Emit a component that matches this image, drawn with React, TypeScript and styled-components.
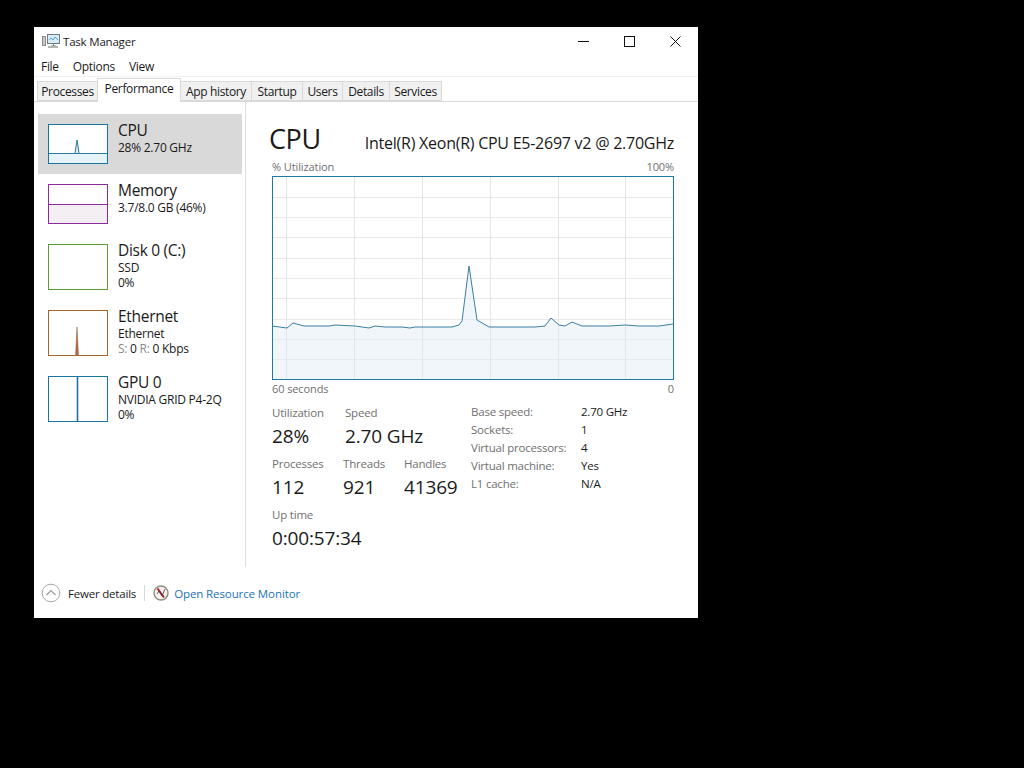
import styled, { createGlobalStyle } from "styled-components";

const GlobalStyle = createGlobalStyle`
  html, body {
    margin: 0;
    background: #000;
    font-family: "Open Sans", "Noto Sans", "Liberation Sans", sans-serif;
    color: #1a1a1a;
  }
`;

const Page = styled.div`
  padding: 27px 0 0 34px;
  height: 741px;
  box-sizing: content-box;
`;

const Window = styled.div`
  width: 664px;
  height: 591px;
  background: #fff;
  display: flex;
  flex-direction: column;
  overflow: hidden;
`;

const TitleBar = styled.div`
  height: 28px;
  display: flex;
  align-items: center;
  padding-left: 8px;
  flex: none;
`;

const TitleText = styled.span`
  font-size: 11.5px;
  margin-left: 3px;
  letter-spacing: -0.2px;
  flex: 1;
`;

const WinButton = styled.div`
  width: 46px;
  height: 28px;
  display: flex;
  align-items: center;
  justify-content: center;
`;

const MenuBar = styled.div`
  height: 22px;
  display: flex;
  align-items: center;
  gap: 14px;
  padding: 2px 0 0 7px;
  font-size: 12px;
  letter-spacing: -0.3px;
  flex: none;
  border-bottom: 1px solid #f0f0f0;
  box-sizing: border-box;
`;

const TabStrip = styled.div`
  height: 25px;
  display: flex;
  align-items: flex-end;
  padding-left: 4px;
  border-bottom: 1px solid #d9d9d9;
  box-sizing: border-box;
  flex: none;
`;

const Tab = styled.div<{ $active?: boolean; $w: number }>`
  width: ${(p) => p.$w}px;
  height: ${(p) => (p.$active ? 24 : 20)}px;
  box-sizing: border-box;
  display: flex;
  align-items: center;
  justify-content: center;
  font-size: 12px;
  letter-spacing: -0.35px;
  white-space: nowrap;
  background: ${(p) => (p.$active ? "#fff" : "#f0f0f0")};
  border: 1px solid #d9d9d9;
  border-bottom: ${(p) => (p.$active ? "none" : "1px solid #d9d9d9")};
  margin-left: -1px;
  margin-bottom: ${(p) => (p.$active ? "-1px" : "0")};
  padding-bottom: ${(p) => (p.$active ? "4px" : "0")};
  position: relative;
  z-index: ${(p) => (p.$active ? 1 : 0)};
`;

const Body = styled.div`
  flex: 1;
  display: flex;
  min-height: 0;
`;

const Sidebar = styled.div`
  width: 212px;
  box-sizing: border-box;
  padding: 12px 3px 0 4px;
  border-right: 1px solid #dedede;
  flex: none;
`;

const SideItem = styled.div<{ $selected?: boolean; $h: number }>`
  height: ${(p) => p.$h}px;
  box-sizing: border-box;
  padding: 10px 0 0 10px;
  display: flex;
  gap: 10px;
  background: ${(p) => (p.$selected ? "#d9d9d9" : "transparent")};
`;

const Thumb = styled.svg<{ $h: number }>`
  width: 60px;
  height: ${(p) => p.$h}px;
  flex: none;
  display: block;
`;

const SideText = styled.div`
  display: flex;
  flex-direction: column;
  margin-top: -3px;
`;

const SideName = styled.div`
  font-size: 15.5px;
  line-height: 19px;
  letter-spacing: -0.3px;
`;

const SideSub = styled.div`
  font-size: 12px;
  line-height: 15px;
  letter-spacing: -0.25px;
  white-space: nowrap;
`;

const Muted = styled.span`
  color: #8a8a8a;
`;

const Main = styled.div`
  flex: 1;
  padding: 14px 24px 0 26px;
  min-width: 0;
`;

const Heading = styled.div`
  display: flex;
  justify-content: space-between;
  align-items: baseline;
  height: 43px;
`;

const HeadTitle = styled.div`
  font-size: 27px;
  line-height: 46px;
  letter-spacing: -0.4px;
  margin-left: -3px;
`;

const HeadModel = styled.div`
  font-size: 16px;
  letter-spacing: -0.25px;
`;

const AxisRow = styled.div`
  display: flex;
  justify-content: space-between;
  font-size: 11px;
  line-height: 16px;
  color: #707070;
  letter-spacing: -0.1px;
`;

const ChartSvg = styled.svg`
  display: block;
  width: 402px;
  height: 204px;
  margin: 1px 0;
`;

const Details = styled.div`
  display: flex;
  margin-top: 8px;
`;

const StatsColumn = styled.div`
  width: 199px;
  flex: none;
`;

const StatRow = styled.div`
  display: flex;
  height: 51px;
`;

const Stat = styled.div<{ $w: number }>`
  width: ${(p) => p.$w}px;
  flex: none;
`;

const StatLabel = styled.div`
  font-size: 11.5px;
  line-height: 16px;
  color: #707070;
  letter-spacing: -0.2px;
`;

const StatValue = styled.div`
  font-size: 19px;
  line-height: 30px;
  letter-spacing: -0.15px;
  white-space: nowrap;
`;

const Specs = styled.div`
  display: grid;
  grid-template-columns: 110px 1fr;
  grid-auto-rows: 18px;
  align-items: center;
  align-content: start;
  margin-top: -3px;
  font-size: 11.5px;
  letter-spacing: -0.22px;
  white-space: nowrap;
`;

const SpecKey = styled.div`
  color: #707070;
`;

const Footer = styled.div`
  height: 51px;
  flex: none;
  box-sizing: border-box;
  display: flex;
  align-items: center;
  padding: 1px 0 0 7px;
  font-size: 11.5px;
  letter-spacing: -0.2px;
`;

const FewerLabel = styled.span`
  margin-left: 7px;
`;

const Separator = styled.div`
  width: 1px;
  height: 16px;
  background: #d9d9d9;
  margin: 0 8px;
`;

const MonitorLink = styled.span`
  color: #1a73b8;
  margin-left: 5px;
  letter-spacing: -0.1px;
`;

const AppIcon = () => (
  <svg width="18" height="16" viewBox="0 0 18 16">
    <rect x="0.5" y="3.5" width="3" height="9" fill="#c9c9c9" stroke="#8d8d8d" />
    <rect x="5.5" y="1.5" width="12" height="9" fill="#d8ecf8" stroke="#6b7c88" />
    <path d="M7 7l2-2 2 2 2-3 3 3" fill="none" stroke="#5fa2cf" />
    <path d="M9 13h5M11.5 10.5v2.5" stroke="#7b7b7b" />
    <rect x="6" y="13" width="10" height="2" fill="#b5b5b5" />
  </svg>
);

const MinIcon = () => (
  <svg width="11" height="11" viewBox="0 0 11 11">
    <path d="M0 5.5h11" stroke="#111" />
  </svg>
);

const MaxIcon = () => (
  <svg width="11" height="11" viewBox="0 0 11 11">
    <rect x="0.5" y="0.5" width="10" height="10" fill="none" stroke="#111" />
  </svg>
);

const CloseIcon = () => (
  <svg width="11" height="11" viewBox="0 0 11 11">
    <path d="M0.5 0.5l10 10M10.5 0.5l-10 10" stroke="#111" />
  </svg>
);

const FewerIcon = () => (
  <svg width="20" height="20" viewBox="0 0 20 20">
    <circle cx="10" cy="10" r="8.8" fill="#fff" stroke="#a8a8a8" />
    <path d="M5.5 12l4.5-4.5 4.5 4.5" fill="none" stroke="#9a9a9a" strokeWidth="1.2" />
  </svg>
);

const ResmonIcon = () => (
  <svg width="16" height="16" viewBox="0 0 16 16">
    <circle cx="8" cy="8" r="7" fill="#f4f1ec" stroke="#8f8a82" strokeWidth="1.4" />
    <path d="M4.5 3.5l6.5 9" stroke="#b3202c" strokeWidth="2" />
    <path d="M4 9l2-3 3 5 3-7" fill="none" stroke="#3a3a4a" strokeWidth="0.8" />
  </svg>
);

// traced from the reference, x and y inside the 402x204 chart
const linePoints = [
  [0, 150], [15, 152], [21, 147], [32, 150], [57, 150], [63, 149], [83, 150], [97, 152],
  [103, 150], [113, 151], [130, 151], [138, 152], [143, 151], [150, 151], [160, 151],
  [173, 151], [180, 151], [187, 149], [190, 145], [197, 90], [205, 144], [217, 151],
  [230, 151], [243, 151], [263, 151], [273, 150], [279, 142], [287, 149], [293, 150],
  [300, 146], [310, 150], [327, 150], [337, 150], [353, 149], [367, 150], [387, 150], [401, 148],
];

const verticals = [14, 82, 150, 218, 286, 353];
const horizontals = [21, 41, 61, 82, 102, 122, 143, 163, 183];

const CpuChart = () => {
  const line = linePoints.map((p) => p.join(",")).join(" ");
  return (
    <ChartSvg viewBox="0 0 402 204">
      <rect width="402" height="204" fill="#fff" />
      <polygon points={`0,204 ${line} 402,204`} fill="#f1f6fb" />
      {horizontals.map((y) => (
        <path key={y} d={`M0 ${y + 0.5}H402`} stroke="#e9e9e9" />
      ))}
      {verticals.map((x) => (
        <path key={x} d={`M${x + 0.5} 0V204`} stroke="#e2e6ea" />
      ))}
      <polyline points={line} fill="none" stroke="#3b7fa3" strokeWidth="1" />
      <rect x="0.5" y="0.5" width="401" height="203" fill="none" stroke="#1c7a9c" />
    </ChartSvg>
  );
};

type ThumbProps = { h: number; color: string; children?: React.ReactNode };

const Thumbnail = ({ h, color, children }: ThumbProps) => (
  <Thumb $h={h} viewBox={`0 0 60 ${h}`}>
    <rect width="60" height={h} fill="#fff" />
    {children}
    <rect x="0.5" y="0.5" width="59" height={h - 1} fill="none" stroke={color} />
  </Thumb>
);

export default function App() {
  return (
    <>
      <GlobalStyle />
      <Page>
        <Window>
          <TitleBar>
            <AppIcon />
            <TitleText>Task Manager</TitleText>
            <WinButton><MinIcon /></WinButton>
            <WinButton><MaxIcon /></WinButton>
            <WinButton><CloseIcon /></WinButton>
          </TitleBar>
          <MenuBar>
            <span>File</span>
            <span>Options</span>
            <span>View</span>
          </MenuBar>
          <TabStrip>
            <Tab $w={61}>Processes</Tab>
            <Tab $active $w={84}>Performance</Tab>
            <Tab $w={72}>App history</Tab>
            <Tab $w={52}>Startup</Tab>
            <Tab $w={41}>Users</Tab>
            <Tab $w={48}>Details</Tab>
            <Tab $w={53}>Services</Tab>
          </TabStrip>
          <Body>
            <Sidebar>
              <SideItem $selected $h={60}>
                <Thumbnail h={40} color="#17759b">
                  <rect x="0" y="29" width="60" height="11" fill="#e6f3f9" />
                  <path d="M0 29.5H60" stroke="#2a7d9f" />
                  <path d="M27 29L29 16L31 29" fill="#d8ecf4" stroke="#2a7d9f" />
                </Thumbnail>
                <SideText>
                  <SideName>CPU</SideName>
                  <SideSub>28% 2.70 GHz</SideSub>
                </SideText>
              </SideItem>
              <SideItem $h={60}>
                <Thumbnail h={40} color="#8b2a9b">
                  <rect x="0" y="21" width="60" height="19" fill="#f3eff3" />
                  <path d="M0 20.5H60" stroke="#8b2a9b" />
                </Thumbnail>
                <SideText>
                  <SideName>Memory</SideName>
                  <SideSub>3.7/8.0 GB (46%)</SideSub>
                </SideText>
              </SideItem>
              <SideItem $h={66}>
                <Thumbnail h={46} color="#5f9c2e" />
                <SideText>
                  <SideName>Disk 0 (C:)</SideName>
                  <SideSub>SSD</SideSub>
                  <SideSub>0%</SideSub>
                </SideText>
              </SideItem>
              <SideItem $h={66}>
                <Thumbnail h={46} color="#a6672d">
                  <path d="M27.5 46L29 17L30.5 46Z" fill="#b06a45" stroke="#8a5a45" strokeWidth="0.5" />
                  <path d="M44 45.5h2" stroke="#d9c4b4" />
                </Thumbnail>
                <SideText>
                  <SideName>Ethernet</SideName>
                  <SideSub>Ethernet</SideSub>
                  <SideSub><Muted>S:</Muted> 0 <Muted>R:</Muted> 0 Kbps</SideSub>
                </SideText>
              </SideItem>
              <SideItem $h={66}>
                <Thumbnail h={46} color="#17759b">
                  <path d="M29.5 0V46" stroke="#1f6fa8" strokeWidth="1.6" />
                </Thumbnail>
                <SideText>
                  <SideName>GPU 0</SideName>
                  <SideSub>NVIDIA GRID P4-2Q</SideSub>
                  <SideSub>0%</SideSub>
                </SideText>
              </SideItem>
            </Sidebar>
            <Main>
              <Heading>
                <HeadTitle>CPU</HeadTitle>
                <HeadModel>Intel(R) Xeon(R) CPU E5-2697 v2 @ 2.70GHz</HeadModel>
              </Heading>
              <AxisRow>
                <span>% Utilization</span>
                <span>100%</span>
              </AxisRow>
              <CpuChart />
              <AxisRow>
                <span>60 seconds</span>
                <span>0</span>
              </AxisRow>
              <Details>
                <StatsColumn>
                  <StatRow>
                    <Stat $w={73}>
                      <StatLabel>Utilization</StatLabel>
                      <StatValue>28%</StatValue>
                    </Stat>
                    <Stat $w={100}>
                      <StatLabel>Speed</StatLabel>
                      <StatValue>2.70 GHz</StatValue>
                    </Stat>
                  </StatRow>
                  <StatRow>
                    <Stat $w={71}>
                      <StatLabel>Processes</StatLabel>
                      <StatValue>112</StatValue>
                    </Stat>
                    <Stat $w={61}>
                      <StatLabel>Threads</StatLabel>
                      <StatValue>921</StatValue>
                    </Stat>
                    <Stat $w={60}>
                      <StatLabel>Handles</StatLabel>
                      <StatValue>41369</StatValue>
                    </Stat>
                  </StatRow>
                  <StatRow>
                    <Stat $w={120}>
                      <StatLabel>Up time</StatLabel>
                      <StatValue>0:00:57:34</StatValue>
                    </Stat>
                  </StatRow>
                </StatsColumn>
                <Specs>
                  <SpecKey>Base speed:</SpecKey><div>2.70 GHz</div>
                  <SpecKey>Sockets:</SpecKey><div>1</div>
                  <SpecKey>Virtual processors:</SpecKey><div>4</div>
                  <SpecKey>Virtual machine:</SpecKey><div>Yes</div>
                  <SpecKey>L1 cache:</SpecKey><div>N/A</div>
                </Specs>
              </Details>
            </Main>
          </Body>
          <Footer>
            <FewerIcon />
            <FewerLabel>Fewer details</FewerLabel>
            <Separator />
            <ResmonIcon />
            <MonitorLink>Open Resource Monitor</MonitorLink>
          </Footer>
        </Window>
      </Page>
    </>
  );
}
